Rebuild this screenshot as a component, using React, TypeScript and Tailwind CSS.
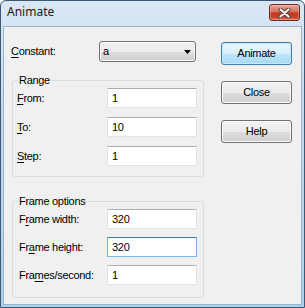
import React from "react";

const txt = "font-['Liberation_Sans',Arial,sans-serif] text-[11px] leading-[13px] tracking-[-0.3px] text-black";

function U({ children }: { children: React.ReactNode }) {
  return <span className="underline decoration-1 underline-offset-[2px]">{children}</span>;
}

function TextBox({ value, focused }: { value: string; focused?: boolean }) {
  return (
    <div
      className={
        focused
          ? "flex h-[20px] w-[90px] items-center border border-[#7eb4ea] border-t-[#3d7bad] bg-white pl-[4px]"
          : "flex h-[20px] w-[90px] items-center border border-[#e2e3ea] border-t-[#abadb3] bg-white pl-[4px]"
      }
    >
      <span className={txt}>{value}</span>
    </div>
  );
}

function Button({ label, isDefault }: { label: string; isDefault?: boolean }) {
  return (
    <div
      className={
        isDefault
          ? "flex h-[23px] w-[71px] items-center justify-center rounded-[3px] border border-[#3c7fb1] bg-[linear-gradient(#eaf6fd,#d9f0fc_50%,#bee6fd_51%,#a7d9f5)] shadow-[inset_0_0_0_1px_#c5e9fb]"
          : "flex h-[23px] w-[71px] items-center justify-center rounded-[3px] border border-[#707070] bg-[linear-gradient(#f2f2f2,#ebebeb_50%,#dddddd_51%,#cfcfcf)] shadow-[inset_0_0_0_1px_#fcfcfc]"
      }
    >
      <span className={txt}>{label}</span>
    </div>
  );
}

function Group({
  title,
  pad,
  gap,
  rows,
}: {
  title: string;
  pad: string;
  gap: string;
  rows: { label: React.ReactNode; value: string; focused?: boolean }[];
}) {
  return (
    <div className={`relative ml-[1px] flex h-[97px] w-[192px] flex-col rounded-[3px] border border-[#d5dfe5] pt-[7px] ${gap}`}>
      <span className={`absolute left-[5px] top-[-7px] bg-[#f0f0f0] px-[1px] ${txt}`}>{title}</span>
      {rows.map((r, i) => (
        <div key={i} className={`flex items-center ${pad}`}>
          <span className={`${txt} ${pad === "pl-[4px]" ? "w-[90px]" : "w-[88px]"}`}>{r.label}</span>
          <TextBox value={r.value} focused={r.focused} />
        </div>
      ))}
    </div>
  );
}

export default function App() {
  return (
    <div className="flex h-[308px] w-[305px] flex-col overflow-hidden rounded-t-[6px] border border-[#3e5874] bg-[linear-gradient(#d9e7f5,#c3d9ef_40%,#a6d3f2)]">
      {/* title bar */}
      <div className="flex h-[25px] shrink-0 items-start">
        <span className="pl-[6px] pt-[3px] font-['Noto_Sans',sans-serif] text-[12px] leading-[16px] text-[#1b1b1b]">
          Animate
        </span>
        <div className="ml-auto mr-[4px] mt-[3px] flex h-[17px] w-[31px] items-center justify-center rounded-[3px] border border-[#6e2a22] bg-[linear-gradient(#e9a696,#d6715c_45%,#c23a22_52%,#c4412a_80%,#dd6e55)] shadow-[inset_0_0_0_1px_rgba(255,220,210,0.35)]">
          <svg width="13" height="10" viewBox="0 0 13 10">
            <path d="M2.5 1.5 L10.5 8.5 M10.5 1.5 L2.5 8.5" stroke="#4a3a3a" strokeWidth="4" strokeLinecap="round" />
            <path d="M2.5 1.5 L10.5 8.5 M10.5 1.5 L2.5 8.5" stroke="#f4f4f4" strokeWidth="2.2" strokeLinecap="round" />
          </svg>
        </div>
      </div>

      {/* client */}
      <div className="flex min-h-0 flex-1 px-[2px] pb-[2px]">
        <div className="flex flex-1 items-start border border-[#9fb3c9] bg-[#f0f0f0] pl-[7px] pt-[14px]">
          <div className="flex w-[193px] flex-col">
            <div className="flex h-[21px] items-center">
              <span className={`${txt} w-[88px]`}>
                <U>C</U>onstant:
              </span>
              <div className="flex h-[21px] w-[97px] items-center justify-between rounded-[3px] border border-[#707070] bg-[linear-gradient(#f2f2f2,#ebebeb_50%,#dddddd_51%,#cfcfcf)] pl-[3px] pr-[4px] shadow-[inset_0_0_0_1px_#fcfcfc]">
                <span className={txt}>a</span>
                <svg width="7" height="4" viewBox="0 0 7 4">
                  <path d="M0 0 H7 L3.5 4 Z" fill="#000" />
                </svg>
              </div>
            </div>

            <div className="mt-[18px]">
              <Group
                title="Range"
                pad="pl-[4px]"
                gap="gap-[9px]"
                rows={[
                  { label: <><U>F</U>rom:</>, value: "1" },
                  { label: <><U>T</U>o:</>, value: "10" },
                  { label: <><U>S</U>tep:</>, value: "1" },
                ]}
              />
            </div>

            <div className="mt-[24px]">
              <Group
                title="Frame options"
                pad="pl-[6px]"
                gap="gap-[8px]"
                rows={[
                  { label: <>F<U>r</U>ame width:</>, value: "320" },
                  { label: <>Fr<U>a</U>me height:</>, value: "320", focused: true },
                  { label: <>Fra<U>m</U>es/second:</>, value: "1" },
                ]}
              />
            </div>
          </div>

          <div className="ml-[17px] mt-[1px] flex flex-col gap-[16px]">
            <Button label="Animate" isDefault />
            <Button label="Close" />
            <Button label="Help" />
          </div>
        </div>
      </div>
    </div>
  );
}
